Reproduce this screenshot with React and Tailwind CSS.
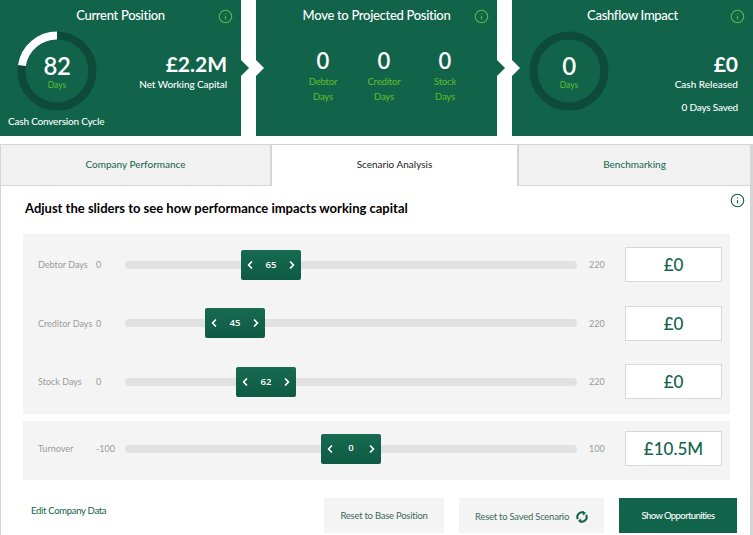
import React from 'react';
import { Info, ChevronLeft, ChevronRight } from 'lucide-react';

const Gauge = ({ value, arc }) => (
    <div className="relative h-[80px] w-[80px]">
        <svg viewBox="0 0 80 80" className="h-[80px] w-[80px]">
            <circle cx="40" cy="40" r="35.5" fill="none" stroke="#0d4a37" strokeWidth="8" />
            {arc && <path d="M40 4.5 A35.5 35.5 0 0 0 4.9 34.5" fill="none" stroke="#ffffff" strokeWidth="8" />}
        </svg>
        <div className="absolute inset-0 flex flex-col items-center justify-center">
            <span className="text-[24px] font-semibold leading-[29px] tracking-[-0.5px] text-white">{value}</span>
            <span className="text-[8.5px] font-medium leading-[11px] text-[#5cb82a]">Days</span>
        </div>
    </div>
);

const InfoIcon = ({ className }) => <Info className={className} strokeWidth={1.8} />;

const Card = ({ title, children, arrow, notch }) => (
    <div className="relative h-[136px] w-[241px] bg-[#11634a]">
        <div className="flex h-[31px] items-center justify-center text-[13px] font-medium tracking-[-0.3px] text-white">{title}</div>
        <InfoIcon className="absolute right-[8px] top-[9px] h-[15px] w-[15px] text-[#5fb847]" />
        {children}
        {arrow && <div className="absolute left-full top-[60px] h-0 w-0 border-y-[8px] border-l-[8px] border-y-transparent border-l-[#11634a]" />}
        {notch && <div className="absolute left-0 top-[60px] h-0 w-0 border-y-[8px] border-l-[8px] border-y-transparent border-l-white" />}
    </div>
);

const DayStat = ({ top, bottom }) => (
    <div className="flex w-[60px] flex-col items-center">
        <span className="text-[22px] font-semibold leading-[26px] text-white">0</span>
        <span className="text-[9.5px] font-medium leading-[15px] tracking-[-0.2px] text-[#5cb82a]">{top}</span>
        <span className="text-[9.5px] font-medium leading-[15px] tracking-[-0.2px] text-[#5cb82a]">{bottom}</span>
    </div>
);

const Slider = ({ label, min, max, value, left, result }) => (
    <div className="flex h-[58.5px] items-center">
        <span className="w-[59px] shrink-0 pl-[15px] text-[9px] whitespace-nowrap text-[#9a9a9a]">{label}</span>
        <span className="w-[43px] shrink-0 pl-[14px] text-[9px] text-[#9a9a9a]">{min}</span>
        <div className="relative h-[8px] w-[452px] shrink-0 rounded-full bg-[#e1e1e1]">
            <div className={`absolute top-[-11px] flex h-[30px] w-[60px] items-center justify-between rounded-[2px] bg-gradient-to-b from-[#166b51] to-[#0e5a42] px-[3px] text-white ${left}`}>
                <ChevronLeft className="h-[12px] w-[12px]" strokeWidth={3.5} />
                <span className="font-['Open_Sans',sans-serif] text-[9.5px] font-semibold">{value}</span>
                <ChevronRight className="h-[12px] w-[12px]" strokeWidth={3.5} />
            </div>
        </div>
        <span className="w-[48px] shrink-0 pl-[12px] text-[9px] text-[#9a9a9a]">{max}</span>
        <div className="flex h-[35px] w-[97px] shrink-0 items-center justify-center border border-[#d8d8d8] bg-white text-[17px] font-medium text-[#11634a]">{result}</div>
    </div>
);

export default function App() {
    return (
        <div className="h-[535px] w-[753px] overflow-hidden bg-white font-['Lato',sans-serif]">
            <div className="flex justify-between">
                <Card title="Current Position" arrow>
                    <div className="flex items-start justify-between pr-[14px]">
                        <div className="ml-[17px]"><Gauge value="82" arc /></div>
                        <div className="mt-[19px] text-right text-white">
                            <div className="text-[21px] font-bold leading-[27px]">£2.2M</div>
                            <div className="text-[10px] font-medium leading-[14px] tracking-[-0.1px]">Net Working Capital</div>
                        </div>
                    </div>
                    <div className="ml-[8px] mt-[3px] text-[10px] font-medium leading-[14px] tracking-[-0.2px] text-white">Cash Conversion Cycle</div>
                </Card>
                <Card title="Move to Projected Position" arrow notch>
                    <div className="mt-[17px] flex gap-[1px] pl-[37px]">
                        <DayStat top="Debtor" bottom="Days" />
                        <DayStat top="Creditor" bottom="Days" />
                        <DayStat top="Stock" bottom="Days" />
                    </div>
                </Card>
                <Card title="Cashflow Impact" notch>
                    <div className="flex items-start justify-between pr-[15px]">
                        <div className="ml-[17px]"><Gauge value="0" /></div>
                        <div className="mt-[19px] text-right text-white">
                            <div className="text-[21px] font-bold leading-[27px]">£0</div>
                            <div className="text-[10px] font-medium leading-[14px]">Cash Released</div>
                            <div className="mt-[9px] text-[10px] font-medium leading-[14px] tracking-[-0.2px]">0 Days Saved</div>
                        </div>
                    </div>
                </Card>
            </div>

            <div className="mt-[8px] h-[391px] border-l border-r-[3px] border-t border-[#d5d5d5]">
                <div className="flex h-[41px] text-[10px]">
                    <div className="flex w-[271px] items-center justify-center border-b border-r-2 border-[#d5d5d5] bg-[#f1f1f1] pb-[2px] text-[#11634a]">Company Performance</div>
                    <div className="flex w-[245px] items-center justify-center bg-white pb-[2px] text-[#222]">Scenario Analysis</div>
                    <div className="flex flex-1 items-center justify-center border-b border-l-2 border-[#d5d5d5] bg-[#f1f1f1] pb-[2px] text-[#11634a]">Benchmarking</div>
                </div>
                <div className="relative">
                    <div className="pl-[24px] pt-[13px] text-[13px] font-bold leading-[18px] text-black">Adjust the sliders to see how performance impacts working capital</div>
                    <InfoIcon className="absolute right-[5px] top-[7px] h-[15px] w-[15px] text-[#11634a]" />
                    <div className="ml-[22px] mt-[17px] h-[180px] w-[707px] bg-[#f4f4f4] pt-[1.5px]">
                        <Slider label="Debtor Days" min="0" max="220" value="65" left="left-[116px]" result="£0" />
                        <Slider label="Creditor Days" min="0" max="220" value="45" left="left-[80px]" result="£0" />
                        <Slider label="Stock Days" min="0" max="220" value="62" left="left-[111px]" result="£0" />
                    </div>
                    <div className="ml-[22px] mt-[7px] flex h-[59px] w-[707px] items-center bg-[#f4f4f4] pb-[4px]">
                        <Slider label="Turnover" min="-100" max="100" value="0" left="left-[196px]" result="£10.5M" />
                    </div>
                    <div className="mt-[18px] flex items-start pl-[30px] pr-[13px]">
                        <span className="mt-[6px] text-[9.5px] leading-[14px] tracking-[-0.3px] text-[#11634a]">Edit Company Data</span>
                        <div className="ml-auto flex gap-[15px] text-[9.5px] tracking-[-0.25px]">
                            <div className="flex h-[35px] w-[120px] items-center justify-center bg-[#f4f4f4] pt-[2px] text-[#3b6a5a]">Reset to Base Position</div>
                            <div className="flex h-[35px] w-[145px] items-center justify-center gap-[7px] bg-[#f4f4f4] pt-[3px] text-[#3b6a5a]">
                                Reset to Saved Scenario
                                <svg viewBox="0 0 14 14" className="h-[12px] w-[12px]" fill="none" stroke="#11634a" strokeWidth="2.4">
                                    <path d="M2.2 9.5A5.4 5.4 0 0 1 9.5 2.2" />
                                    <path d="M11.8 4.5A5.4 5.4 0 0 1 4.5 11.8" />
                                    <path d="M8 0.5L11 2.4L8.6 4.6Z" fill="#11634a" strokeWidth="1" />
                                    <path d="M6 13.5L3 11.6L5.4 9.4Z" fill="#11634a" strokeWidth="1" />
                                </svg>
                            </div>
                            <div className="flex h-[35px] w-[118px] items-center justify-center bg-[#11634a] pt-[2px] font-medium tracking-[-0.6px] text-white">Show Opportunities</div>
                        </div>
                    </div>
                </div>
            </div>
        </div>
    );
}
